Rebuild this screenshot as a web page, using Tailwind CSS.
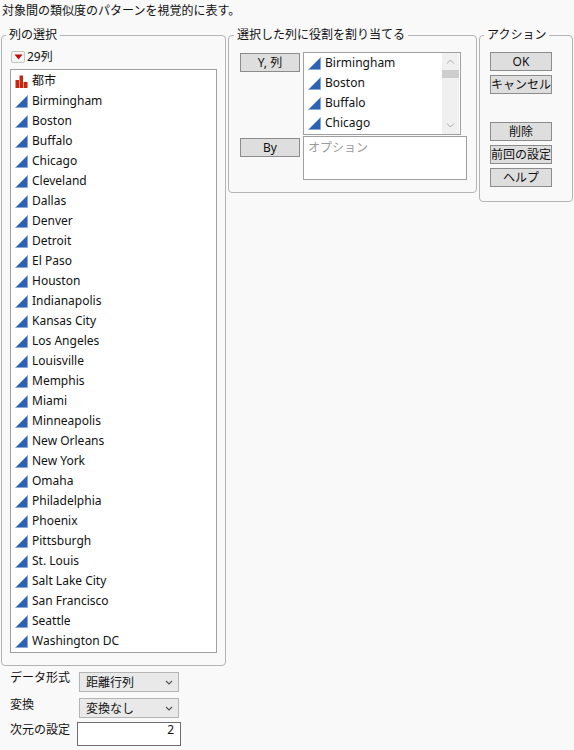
<!DOCTYPE html>
<html lang="ja">
<head>
  <meta charset="utf-8">
  <title>多次元尺度構成法</title>
  <script src="https://cdn.jsdelivr.net/npm/@tailwindcss/browser@4"></script>
</head>
<body class="w-[574px] h-[750px] overflow-hidden bg-[#f9f9f9] text-[#111] text-[12px] leading-[20px] font-['Noto_Sans','Noto_Sans_CJK_JP',sans-serif]">
  <svg class="hidden">
    <symbol id="tri" viewBox="0 0 13 13"><path d="M0.5 12.5 L12.5 0.5 V12.5 Z" fill="#2c62b2" stroke="#86a6d6" stroke-width="0.8"/></symbol>
  </svg>

  <div class="h-[20px] pt-[1px] pl-[2px] whitespace-nowrap">対象間の類似度のパターンを視覚的に表す。</div>

  <div class="flex items-start mt-[6px] pl-[1px]">
    <!-- 列の選択 -->
    <div>
      <fieldset class="w-[225px] h-[640px] border border-[#b4b4b4] rounded-[4px] pl-[8px] pr-[7px]">
        <legend class="ml-[-4px] px-[3px] leading-[18px]">列の選択</legend>
        <div class="flex items-center h-[20px] mt-[3px] mb-[2px] ml-[1px]">
          <span class="flex items-center justify-center w-[14px] h-[12px] border border-[#c4c4c4] rounded-[2px] bg-[#f4f4f4] mr-[2px]">
            <svg width="9" height="6" viewBox="0 0 9 6"><path d="M0.5 0.5 H8.5 L4.5 5.5 Z" fill="#c00d0d"/></svg>
          </span>
          <span>29列</span>
        </div>
        <ul class="w-[207px] h-[584px] border border-[#a0a0a0] bg-white pl-[4px] pt-[1px]">
          <li class="flex items-center h-[20px]">
            <svg class="w-[13px] h-[13px] mr-[4px]" viewBox="0 0 13 13"><path d="M0.5 13 V5 H4 V13 Z M4.5 13 V0.5 H8 V13 Z M8.5 13 V7 H12.5 V13 Z" fill="#c8270f"/></svg>
            <span>都市</span>
          </li>
          <li class="flex items-center h-[20px]"><svg class="w-[13px] h-[13px] mr-[4px]"><use href="#tri"/></svg><span>Birmingham</span></li>
          <li class="flex items-center h-[20px]"><svg class="w-[13px] h-[13px] mr-[4px]"><use href="#tri"/></svg><span>Boston</span></li>
          <li class="flex items-center h-[20px]"><svg class="w-[13px] h-[13px] mr-[4px]"><use href="#tri"/></svg><span>Buffalo</span></li>
          <li class="flex items-center h-[20px]"><svg class="w-[13px] h-[13px] mr-[4px]"><use href="#tri"/></svg><span>Chicago</span></li>
          <li class="flex items-center h-[20px]"><svg class="w-[13px] h-[13px] mr-[4px]"><use href="#tri"/></svg><span>Cleveland</span></li>
          <li class="flex items-center h-[20px]"><svg class="w-[13px] h-[13px] mr-[4px]"><use href="#tri"/></svg><span>Dallas</span></li>
          <li class="flex items-center h-[20px]"><svg class="w-[13px] h-[13px] mr-[4px]"><use href="#tri"/></svg><span>Denver</span></li>
          <li class="flex items-center h-[20px]"><svg class="w-[13px] h-[13px] mr-[4px]"><use href="#tri"/></svg><span>Detroit</span></li>
          <li class="flex items-center h-[20px]"><svg class="w-[13px] h-[13px] mr-[4px]"><use href="#tri"/></svg><span>El Paso</span></li>
          <li class="flex items-center h-[20px]"><svg class="w-[13px] h-[13px] mr-[4px]"><use href="#tri"/></svg><span>Houston</span></li>
          <li class="flex items-center h-[20px]"><svg class="w-[13px] h-[13px] mr-[4px]"><use href="#tri"/></svg><span>Indianapolis</span></li>
          <li class="flex items-center h-[20px]"><svg class="w-[13px] h-[13px] mr-[4px]"><use href="#tri"/></svg><span>Kansas City</span></li>
          <li class="flex items-center h-[20px]"><svg class="w-[13px] h-[13px] mr-[4px]"><use href="#tri"/></svg><span>Los Angeles</span></li>
          <li class="flex items-center h-[20px]"><svg class="w-[13px] h-[13px] mr-[4px]"><use href="#tri"/></svg><span>Louisville</span></li>
          <li class="flex items-center h-[20px]"><svg class="w-[13px] h-[13px] mr-[4px]"><use href="#tri"/></svg><span>Memphis</span></li>
          <li class="flex items-center h-[20px]"><svg class="w-[13px] h-[13px] mr-[4px]"><use href="#tri"/></svg><span>Miami</span></li>
          <li class="flex items-center h-[20px]"><svg class="w-[13px] h-[13px] mr-[4px]"><use href="#tri"/></svg><span>Minneapolis</span></li>
          <li class="flex items-center h-[20px]"><svg class="w-[13px] h-[13px] mr-[4px]"><use href="#tri"/></svg><span>New Orleans</span></li>
          <li class="flex items-center h-[20px]"><svg class="w-[13px] h-[13px] mr-[4px]"><use href="#tri"/></svg><span>New York</span></li>
          <li class="flex items-center h-[20px]"><svg class="w-[13px] h-[13px] mr-[4px]"><use href="#tri"/></svg><span>Omaha</span></li>
          <li class="flex items-center h-[20px]"><svg class="w-[13px] h-[13px] mr-[4px]"><use href="#tri"/></svg><span>Philadelphia</span></li>
          <li class="flex items-center h-[20px]"><svg class="w-[13px] h-[13px] mr-[4px]"><use href="#tri"/></svg><span>Phoenix</span></li>
          <li class="flex items-center h-[20px]"><svg class="w-[13px] h-[13px] mr-[4px]"><use href="#tri"/></svg><span>Pittsburgh</span></li>
          <li class="flex items-center h-[20px]"><svg class="w-[13px] h-[13px] mr-[4px]"><use href="#tri"/></svg><span>St. Louis</span></li>
          <li class="flex items-center h-[20px]"><svg class="w-[13px] h-[13px] mr-[4px]"><use href="#tri"/></svg><span>Salt Lake City</span></li>
          <li class="flex items-center h-[20px]"><svg class="w-[13px] h-[13px] mr-[4px]"><use href="#tri"/></svg><span>San Francisco</span></li>
          <li class="flex items-center h-[20px]"><svg class="w-[13px] h-[13px] mr-[4px]"><use href="#tri"/></svg><span>Seattle</span></li>
          <li class="flex items-center h-[20px]"><svg class="w-[13px] h-[13px] mr-[4px]"><use href="#tri"/></svg><span>Washington DC</span></li>
        </ul>
      </fieldset>

      <!-- オプション -->
      <div class="grid grid-cols-[67px_auto] justify-start pl-[9px] mt-[6px]">
        <div class="h-[26px] mt-[-4px]">データ形式</div>
        <div class="flex items-center justify-between w-[100px] h-[20px] ml-[2px] pt-[1px] border border-[#b4b4b4] bg-[#e9e9e9] pl-[6px] pr-[5px]">
          <span>距離行列</span>
          <svg width="8" height="5" viewBox="0 0 8 5"><path d="M1 1 L4 4 L7 1" fill="none" stroke="#555" stroke-width="1.2"/></svg>
        </div>
        <div class="h-[23px] mt-[1px]">変換</div>
        <div class="flex items-center justify-between w-[100px] h-[20px] ml-[2px] mt-[4px] pt-[1px] border border-[#b4b4b4] bg-[#e9e9e9] pl-[6px] pr-[5px]">
          <span>変換なし</span>
          <svg width="8" height="5" viewBox="0 0 8 5"><path d="M1 1 L4 4 L7 1" fill="none" stroke="#555" stroke-width="1.2"/></svg>
        </div>
        <div class="h-[24px] mt-[2px]">次元の設定</div>
        <div class="w-[104px] h-[24px] mt-[4px] border border-[#6e6e6e] bg-white text-right pr-[6px] leading-[13px]">2</div>
      </div>
    </div>

    <!-- 選択した列に役割を割り当てる -->
    <fieldset class="w-[249px] h-[167px] ml-[2px] border border-[#b4b4b4] rounded-[4px] pl-[11px]">
      <legend class="ml-[-6px] px-[3px] leading-[18px]">選択した列に役割を割り当てる</legend>
      <div class="flex items-start mt-[8px]">
        <button class="w-[60px] h-[19px] mt-[1px] border border-[#8c8c8c] bg-[#dedede] leading-[16px]">Y, 列</button>
        <div class="flex w-[158px] h-[83px] ml-[3px] border border-[#a0a0a0] bg-white">
          <ul class="flex-1 pl-[4px]">
            <li class="flex items-center h-[20px]"><svg class="w-[13px] h-[13px] mr-[4px]"><use href="#tri"/></svg><span>Birmingham</span></li>
            <li class="flex items-center h-[20px]"><svg class="w-[13px] h-[13px] mr-[4px]"><use href="#tri"/></svg><span>Boston</span></li>
            <li class="flex items-center h-[20px]"><svg class="w-[13px] h-[13px] mr-[4px]"><use href="#tri"/></svg><span>Buffalo</span></li>
            <li class="flex items-center h-[20px]"><svg class="w-[13px] h-[13px] mr-[4px]"><use href="#tri"/></svg><span>Chicago</span></li>
          </ul>
          <div class="flex flex-col items-center w-[17px] mr-[1px] bg-[#f0f0f0] pt-[6px] pb-[6px]">
            <svg width="9" height="5" viewBox="0 0 9 5"><path d="M1 4.5 L4.5 1 L8 4.5" fill="none" stroke="#a8a8a8"/></svg>
            <div class="w-[17px] h-[8px] bg-[#cdcdcd] mt-[6px] mb-auto"></div>
            <svg width="9" height="5" viewBox="0 0 9 5"><path d="M1 0.5 L4.5 4 L8 0.5" fill="none" stroke="#a8a8a8"/></svg>
          </div>
        </div>
      </div>
      <div class="flex items-start mt-[1px]">
        <button class="w-[60px] h-[19px] mt-[2px] border border-[#8c8c8c] bg-[#dedede] leading-[16px]">By</button>
        <div class="w-[164px] h-[44px] ml-[3px] pt-[1px] border border-[#a0a0a0] bg-white pl-[4px] text-[#9a9a9a] leading-[20px]">オプション</div>
      </div>
    </fieldset>

    <!-- アクション -->
    <fieldset class="w-[94px] h-[176px] ml-[2px] border border-[#b4b4b4] rounded-[4px] pl-[10px]">
      <legend class="ml-[-6px] px-[3px] leading-[18px]">アクション</legend>
      <div class="flex flex-col mt-[8px]">
        <button class="w-[62px] h-[19px] border border-[#8c8c8c] bg-[#dedede] leading-[16px]">OK</button>
        <button class="w-[62px] h-[19px] mt-[4px] border border-[#8c8c8c] bg-[#dedede] leading-[16px] whitespace-nowrap">キャンセル</button>
        <button class="w-[62px] h-[19px] mt-[28px] border border-[#8c8c8c] bg-[#dedede] leading-[16px]">削除</button>
        <button class="w-[62px] h-[19px] mt-[4px] border border-[#8c8c8c] bg-[#dedede] leading-[16px] whitespace-nowrap">前回の設定</button>
        <button class="w-[62px] h-[19px] mt-[4px] border border-[#8c8c8c] bg-[#dedede] leading-[16px]">ヘルプ</button>
      </div>
    </fieldset>
  </div>
</body>
</html>
